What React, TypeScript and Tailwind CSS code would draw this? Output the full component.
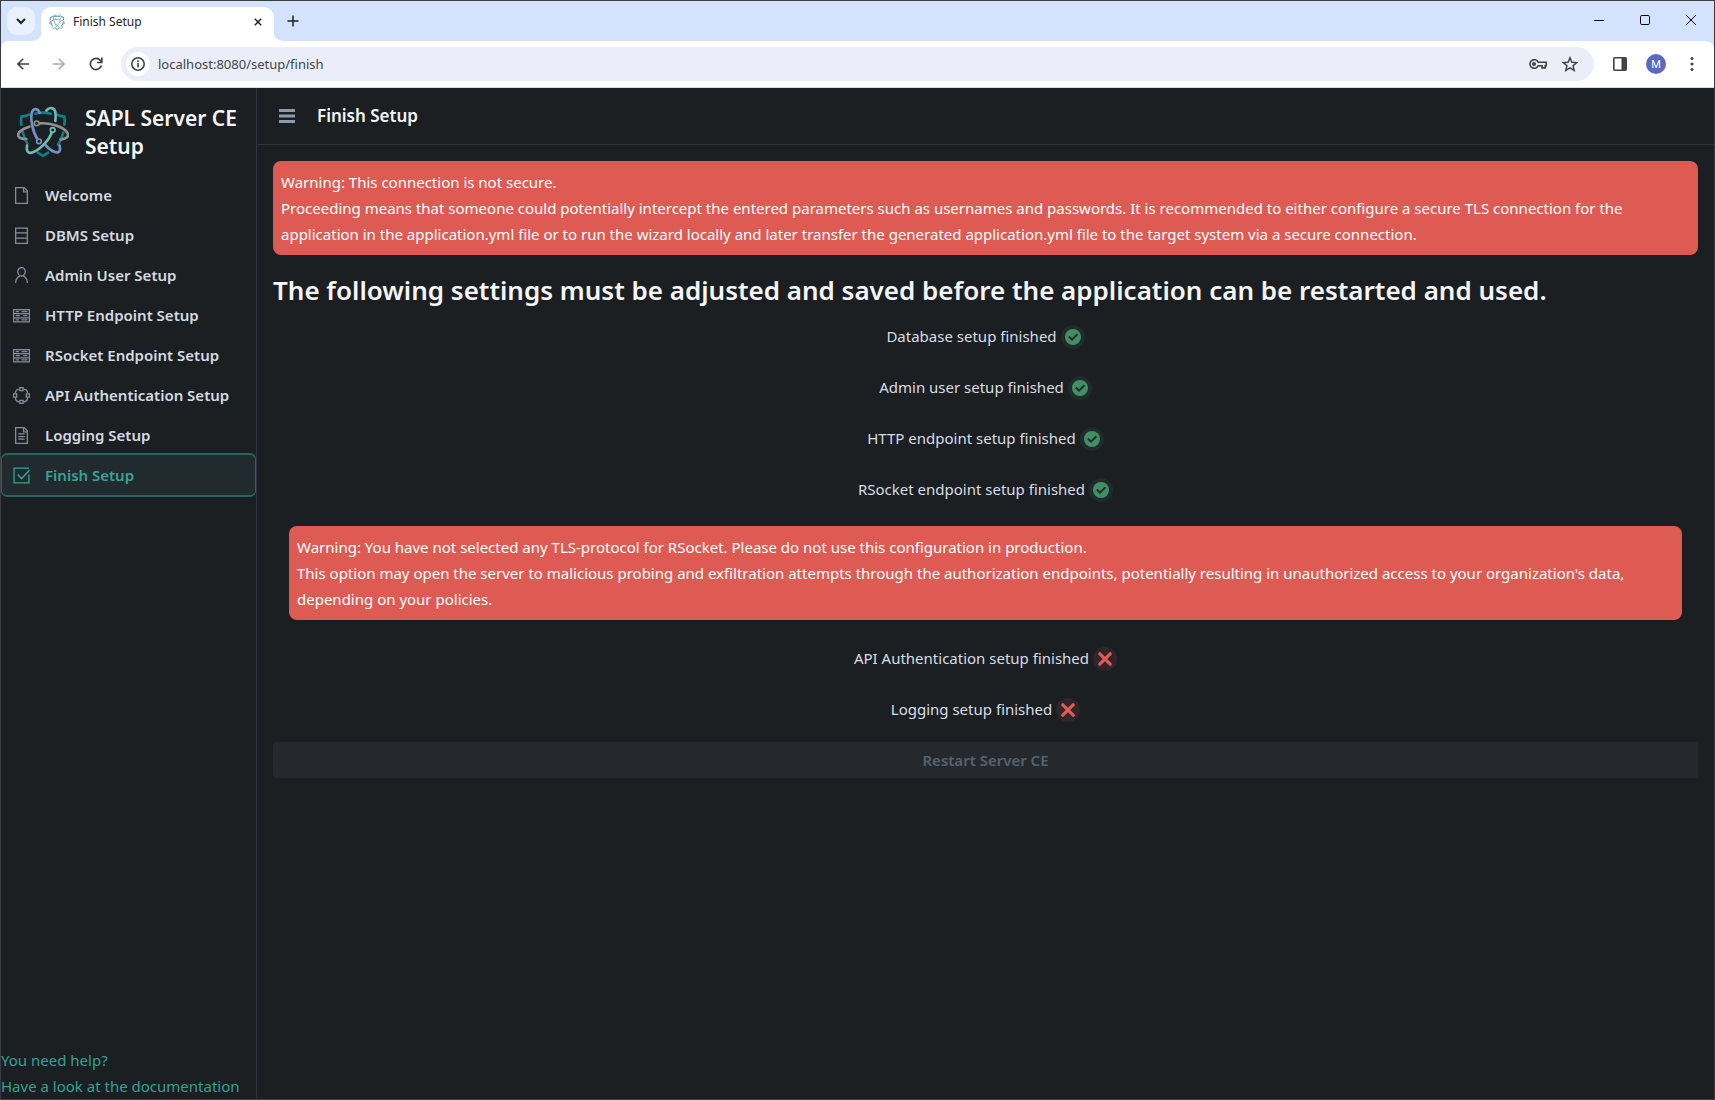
import React from 'react';

function Logo({ className }: { className: string }) {
  return (
    <svg viewBox="21 18 156 154" className={className} fill="none" strokeWidth="8" strokeLinecap="round" aria-hidden="true">
      <g stroke="#0d7f89">
        <path d="M76 40q23-6 46 0" />
        <path d="M56 43q-11 5-22 6q-2 12 0 24" />
        <path d="M142 43q11 5 21 6q2 12 0 24" />
        <path d="M38 95q6 22 14 35" />
        <path d="M160 97q-6 22-16 36" />
        <path d="M84 157l15 10l15-10" />
      </g>
      <g stroke="#8f9092">
        <path d="M88 69c34-2 72 10 84 28c7 14-7 19-20 20" />
        <path d="M58 79c-22 7-36 18-33 28c3 8 14 9 24 9" />
        <circle cx="80" cy="69" r="7" strokeWidth="5" />
      </g>
      <g stroke="#7391c4">
        <path d="M82 116c-14-22-22-62-16-81c5-13 18-11 23 2" />
        <path d="M106 134c12 13 28 23 38 22c7-2 7-10 5-20" />
        <circle cx="87" cy="123" r="7" strokeWidth="5" />
      </g>
      <g stroke="#6fbcb4">
        <path d="M125 97c-8 24-38 54-60 60c-14 3-16-8-14-21" />
        <path d="M109 31c9-12 24-10 27 4c2 9 1 17 0 27" />
        <circle cx="128" cy="89" r="7" strokeWidth="5" />
      </g>
    </svg>
  );
}

const iconPaths: Record<string, React.ReactNode> = {
  file: (
    <>
      <path d="M2.500 .5h8l3 3v12h-11z" />
      <path d="M10 .5v4h3.500" />
    </>
  ),
  db: <path d="M2.500 1h11v14.500h-11zM2.500 5.500h11M2.500 10.500h11" />,
  user: (
    <>
      <ellipse cx="8" cy="4.500" rx="3.500" ry="4" />
      <path d="M2.500 15c0-4 1.800-5.700 4-6.700M13.500 15c0-4-1.800-5.700-4-6.700" />
    </>
  ),
  server: (
    <>
      <path d="M.5 2.500h15v11.500h-15zM.5 6.200h15M.5 10.200h15" />
      <path d="M2.500 4.400h3M8 4.400h5.500M2.500 8.200h4M9.500 8.200h4M2.500 12.100h3M8 12.100h5.500" />
    </>
  ),
  cluster: (
    <>
      <path d="M6.500 .5h3v3h-3zM6.500 12.500h3v3h-3zM.5 6.500h3v3h-3zM12.500 6.500h3v3h-3z" />
      <path d="M6 2q-3.500 .2-3.800 4M10 2q3.500 .2 3.800 4M6 14q-3.500-.2-3.800-4M10 14q3.500-.2 3.800-4" />
    </>
  ),
  text: (
    <>
      <path d="M2.500 .5h8l3 3v12h-11z" />
      <path d="M10 .5v4h3.500M5 6.500h6M5 9h6M5 11.500h6" />
    </>
  ),
  check: (
    <>
      <path d="M15 7v8h-14v-14h14" />
      <path d="M4.500 7l3.500 4l7.500-8" strokeWidth="1.500" />
    </>
  ),
};

const nav = [
  ['file', 'Welcome'],
  ['db', 'DBMS Setup'],
  ['user', 'Admin User Setup'],
  ['server', 'HTTP Endpoint Setup'],
  ['server', 'RSocket Endpoint Setup'],
  ['cluster', 'API Authentication Setup'],
  ['text', 'Logging Setup'],
  ['check', 'Finish Setup'],
];

function NavLink({ icon, label, active }: { icon: string; label: string; active: boolean }) {
  return (
    <a
      href="#"
      aria-current={active ? 'page' : undefined}
      className={
        active
          ? '-my-0.5 flex h-11 items-center gap-[15px] rounded-md border-x border-y-2 border-[#2a6361] bg-[#212b2d] pl-[11px] text-[#39a299]'
          : 'flex h-10 items-center gap-[15px] pl-3 text-[#d5dae1]'
      }
    >
      <svg viewBox="0 0 16 16" className={active ? 'size-[17px]' : 'size-[17px] text-[#858e9c]'} fill="none" stroke="currentColor" strokeWidth="1.200" aria-hidden="true">
        {iconPaths[icon]}
      </svg>
      <span className="text-[15px] font-semibold">{label}</span>
    </a>
  );
}

function StatusRow({ label, done }: { label: string; done: boolean }) {
  return (
    <li className="flex h-[51px] items-center justify-center gap-1">
      <span>{label}</span>
      {done ? (
        <span role="img" aria-label="finished" className="mt-0.5 grid size-6 place-items-center rounded-full bg-[#202c2b]">
          <svg viewBox="0 0 16 16" className="size-4">
            <circle cx="8" cy="8" r="8" fill="#438f64" />
            <path d="M3.800 7.500l3.200 3.200l5.400-5.500" fill="none" stroke="#202c2b" strokeWidth="2" />
          </svg>
        </span>
      ) : (
        <span role="img" aria-label="not finished" className="mt-0.5 grid size-6 place-items-center rounded-full bg-[#302529]">
          <svg viewBox="0 0 16 16" className="size-4">
            <path d="M2.800 2.800l10.400 10.400M13.200 2.800l-10.400 10.400" fill="none" stroke="#e05b55" strokeWidth="3.200" strokeLinecap="round" />
          </svg>
        </span>
      )}
    </li>
  );
}

function Alert({ children }: { children: React.ReactNode }) {
  return <div role="alert" className="rounded-lg bg-[#de5b54] p-2 text-white">{children}</div>;
}

export default function App() {
  return (
    <div className="flex h-screen flex-col overflow-hidden border border-[#3c3d42] bg-[#1b1f22] font-['Noto_Sans','Open_Sans',sans-serif] text-[15px] leading-[26px] text-[#d8dde4]">
      <header className="bg-[#d3e2fd] text-[#1f1f1f]">
        <div className="flex h-10 items-end">
          <div className="flex h-full items-center pl-1.5">
            <button aria-label="Search tabs" className="grid size-7 place-items-center rounded-[10px] bg-[#eaf1fe]">
              <svg viewBox="0 0 10 10" className="size-2.5" fill="none" stroke="currentColor" strokeWidth="2"><path d="M1 3l4 4l4-4" /></svg>
            </button>
          </div>
          <svg viewBox="0 0 10 10" className="-mr-px ml-[-3px] size-2.5 text-white" aria-hidden="true"><path d="M10 0v10H0A10 10 0 0 0 10 0" fill="currentColor" /></svg>
          <div className="flex h-[34px] w-[233px] items-center rounded-t-[10px] bg-white pr-2 pb-1 pl-2">
            <Logo className="size-4" />
            <span className="ml-2 flex-1 text-xs">Finish Setup</span>
            <button aria-label="Close tab" className="grid size-4 place-items-center">
              <svg viewBox="0 0 10 10" className="size-2" fill="none" stroke="currentColor" strokeWidth="1.800"><path d="M1 1l8 8M9 1l-8 8" /></svg>
            </button>
          </div>
          <svg viewBox="0 0 10 10" className="-ml-px size-2.5 text-white" aria-hidden="true"><path d="M0 0v10h10A10 10 0 0 1 0 0" fill="currentColor" /></svg>
          <button aria-label="New tab" className="mb-3.5 ml-1 grid size-3 place-items-center">
            <svg viewBox="0 0 12 12" className="size-3" fill="none" stroke="currentColor" strokeWidth="1.500"><path d="M6 .5v11M.5 6h11" /></svg>
          </button>
          <div className="ml-auto flex h-full items-center gap-9 pr-[18px] pb-0.5 text-black">
            <button aria-label="Minimize"><svg viewBox="0 0 10 10" className="size-2.5" stroke="currentColor"><path d="M0 5.500h10" /></svg></button>
            <button aria-label="Maximize"><svg viewBox="0 0 10 10" className="size-2.5" fill="none" stroke="currentColor"><rect x=".5" y=".5" width="9" height="9" rx="1.200" /></svg></button>
            <button aria-label="Close"><svg viewBox="0 0 10 10" className="size-2.5" fill="none" stroke="currentColor"><path d="M0 0l10 10M10 0L0 10" /></svg></button>
          </div>
        </div>
        <div className="flex h-[47px] items-center rounded-t-lg border-b border-[#d9dbde] bg-white pr-5 pl-4 text-[#414345]">
          <button aria-label="Back"><svg viewBox="0 0 12 12" className="size-3" fill="none" stroke="currentColor" strokeWidth="1.600"><path d="M12 6H1M6.200 .8L1 6l5.200 5.200" /></svg></button>
          <button aria-label="Forward" className="ml-6 text-[#a9abad]"><svg viewBox="0 0 12 12" className="size-3" fill="none" stroke="currentColor" strokeWidth="1.600"><path d="M0 6h11M5.800 .8L11 6l-5.200 5.200" /></svg></button>
          <button aria-label="Reload" className="ml-6"><svg viewBox="0 0 14 14" className="size-3.5" fill="none" stroke="currentColor" strokeWidth="1.700"><path d="M12.400 8.500A5.600 5.600 0 1 1 11.200 3.200L12.800 5" /><path d="M12.800 .5v5H8" /></svg></button>
          <div className="ml-[18px] flex h-[34px] flex-1 items-center rounded-full bg-[#ebeef8] pr-4 pl-[5px]">
            <button aria-label="Site information" className="grid size-6 place-items-center rounded-full bg-white">
              <svg viewBox="0 0 14 14" className="size-3.5" fill="none" stroke="currentColor" strokeWidth="1.600"><circle cx="7" cy="7" r="6.200" /><path d="M7 6v4.500M7 3.300v1.600" /></svg>
            </button>
            <input aria-label="Address" defaultValue="localhost:8080/setup/finish" className="ml-2 w-full flex-1 bg-transparent text-[13px] outline-none" />
            <button aria-label="Passwords">
              <svg viewBox="0 0 18 10" className="h-2.5 w-[18px]" fill="none" stroke="currentColor" strokeWidth="1.600"><path d="M9.200 3.300h8v3.400h-1v2.200h-3.200V6.700H9.200A4.300 4.300 0 1 1 9.200 3.300z" /><circle cx="5" cy="5" r="1.200" fill="currentColor" /></svg>
            </button>
            <button aria-label="Bookmark" className="ml-[15px]">
              <svg viewBox="0 0 16 16" className="size-4" fill="none" stroke="currentColor" strokeWidth="1.500"><path d="M8 1.800l1.900 4.400l4.800 .4l-3.600 3.200l1.100 4.600L8 11.900l-4.200 2.500l1.100-4.600L1.300 6.600l4.800-.4z" /></svg>
            </button>
          </div>
          <button aria-label="Side panel" className="ml-[19px]">
            <svg viewBox="0 0 14 14" className="size-3.5" fill="none" stroke="currentColor" strokeWidth="1.600"><rect x=".8" y=".8" width="12.400" height="12.400" rx="1" /><path d="M8.500 1h4.500v12H8.500z" fill="currentColor" stroke="none" /></svg>
          </button>
          <button aria-label="Profile" className="ml-[19px] grid size-5 place-items-center rounded-full bg-[#5b69c1] font-['Roboto'] text-[11px] leading-none text-white">M</button>
          <button aria-label="Menu" className="ml-6"><svg viewBox="0 0 4 14" className="h-3.5 w-1" fill="currentColor"><circle cx="2" cy="1.500" r="1.500" /><circle cx="2" cy="7" r="1.500" /><circle cx="2" cy="12.500" r="1.500" /></svg></button>
        </div>
      </header>

      <div className="flex min-h-0 flex-1">
        <aside className="flex w-64 shrink-0 flex-col border-r border-[#32383f]">
          <div className="flex items-center gap-4 px-4 pt-4 pb-[15px]">
            <Logo className="size-[52px] shrink-0" />
            <h1 className="flex-1 text-[21px] leading-7 font-semibold text-[#f4f6f9]">SAPL Server CE Setup</h1>
          </div>
          <nav className="flex flex-col">
            {nav.map(([icon, label], i) => (
              <NavLink key={label} icon={icon} label={label} active={i === nav.length - 1} />
            ))}
          </nav>
          <a href="#" className="mt-auto text-[#36a096]">You need help?<br />Have a look at the documentation</a>
        </aside>

        <main className="flex min-w-0 flex-1 flex-col">
          <div className="flex h-[57px] items-center gap-[22px] border-b border-[#2d333a] pl-[22px]">
            <button aria-label="Toggle menu" className="text-[#8e99aa]">
              <svg viewBox="0 0 16 14" className="h-3.5 w-4" fill="currentColor"><path d="M0 0h16v3H0zM0 5.500h16v3H0zM0 11h16v3H0z" /></svg>
            </button>
            <h2 className="text-[17px] font-semibold text-[#f4f6f9]">Finish Setup</h2>
          </div>
          <div className="flex flex-col p-4">
            <Alert>
              Warning: This connection is not secure.<br />
              Proceeding means that someone could potentially intercept the entered parameters such as usernames and passwords. It is recommended to either configure a secure TLS connection for the application in the application.yml file or to run the wizard locally and later transfer the generated application.yml file to the target system via a secure connection.
            </Alert>
            <h2 className="mt-[18px] text-[26px] leading-[35px] font-semibold text-[#f4f6f9]">The following settings must be adjusted and saved before the application can be restarted and used.</h2>
            <ul className="mt-0.5">
              <StatusRow label="Database setup finished" done />
              <StatusRow label="Admin user setup finished" done />
              <StatusRow label="HTTP endpoint setup finished" done />
              <StatusRow label="RSocket endpoint setup finished" done />
            </ul>
            <div className="mx-4 my-3">
              <Alert>
                Warning: You have not selected any TLS-protocol for RSocket. Please do not use this configuration in production.<br />
                This option may open the server to malicious probing and exfiltration attempts through the authorization endpoints, potentially resulting in unauthorized access to your organization's data, depending on your policies.
              </Alert>
            </div>
            <ul>
              <StatusRow label="API Authentication setup finished" done={false} />
              <StatusRow label="Logging setup finished" done={false} />
            </ul>
            <button disabled className="mt-2 h-9 rounded bg-[#25292e] font-semibold text-[#566170]">Restart Server CE</button>
          </div>
        </main>
      </div>
    </div>
  );
}
